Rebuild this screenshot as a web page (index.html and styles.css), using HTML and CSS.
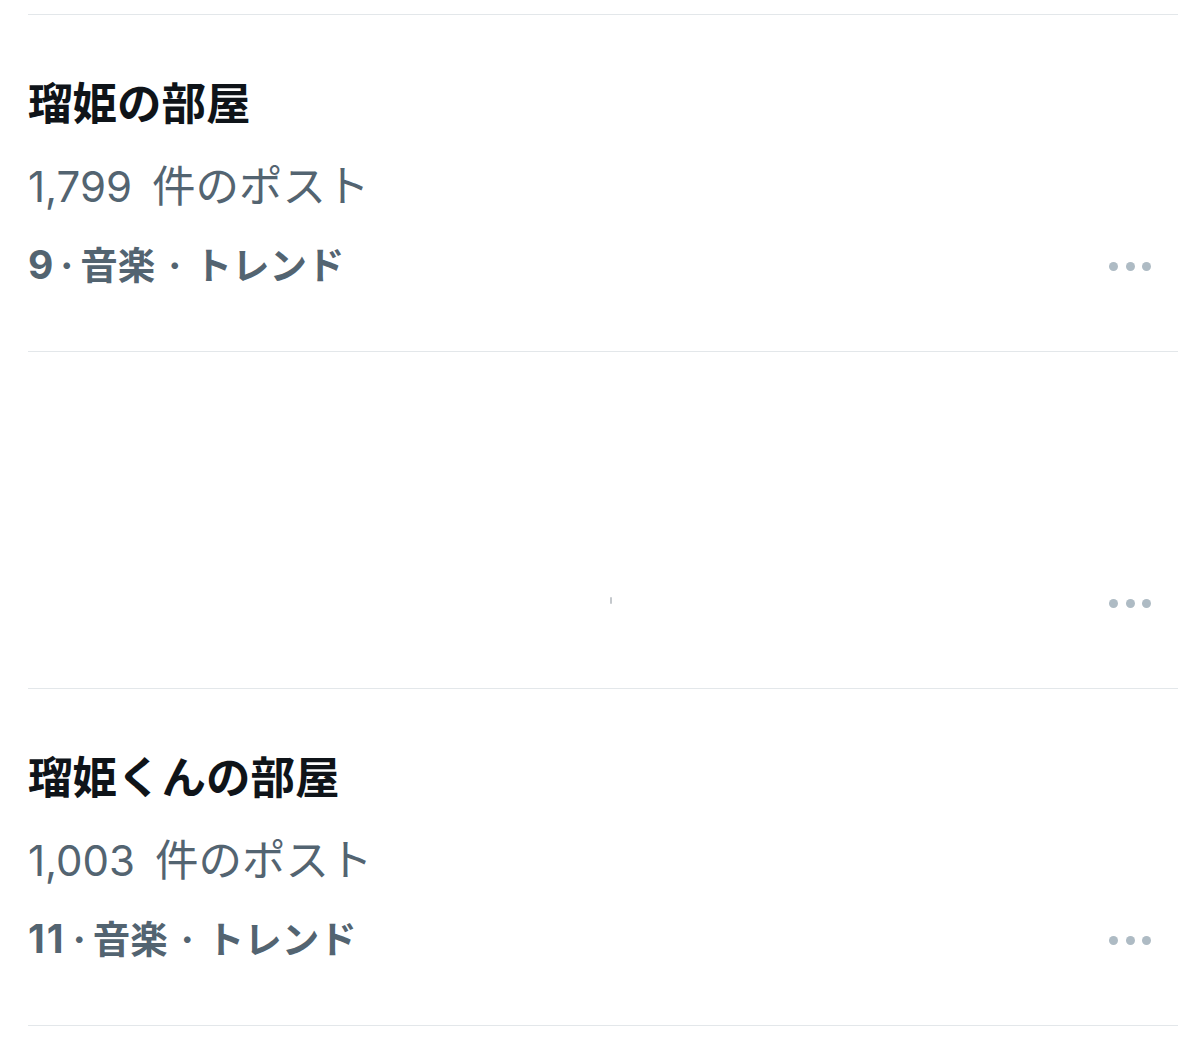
FILE: index.html
```html
<!DOCTYPE html>
<html lang="ja">
<head>
<meta charset="utf-8">
<title>トレンド</title>
<link rel="stylesheet" href="styles.css">
</head>
<body>
<div class="list">
  <div class="row">
    <div class="title">瑠姫の部屋</div>
    <div class="count"><span class="num">1,799</span><span class="unit">件のポスト</span></div>
    <div class="meta">
      <span class="meta-text"><span class="rank">9</span><span class="sep">·</span>音楽<span class="sep sep-wide">·</span>トレンド</span>
      <span class="more"><i></i><i></i><i></i></span>
    </div>
  </div>
  <div class="row">
    <div class="title"></div>
    <div class="count"></div>
    <div class="meta">
      <span class="meta-text"></span>
      <span class="more"><i></i><i></i><i></i></span>
    </div>
    <span class="speck"></span>
  </div>
  <div class="row">
    <div class="title">瑠姫くんの部屋</div>
    <div class="count"><span class="num">1,003</span><span class="unit">件のポスト</span></div>
    <div class="meta">
      <span class="meta-text"><span class="rank rank-wide">11</span><span class="sep">·</span>音楽<span class="sep sep-wide">·</span>トレンド</span>
      <span class="more"><i></i><i></i><i></i></span>
    </div>
  </div>
</div>
</body>
</html>
```
FILE: styles.css
```css
html, body {
  margin: 0;
  padding: 0;
  background: #ffffff;
}
body {
  font-family: Inter, "Noto Sans CJK JP", sans-serif;
  width: 1200px;
  height: 1048px;
  overflow: hidden;
}
.list {
  margin: 14px 22px 0 28px;
  border-top: 1px solid #e3e7ea;
}
.row {
  position: relative;
  height: 287px;
  border-bottom: 1px solid #e3e7ea;
  padding-top: 49px;
  display: flex;
  flex-direction: column;
}
.title {
  height: 80px;
  line-height: 80px;
  font-size: 44.5px;
  font-weight: 700;
  color: #0f1419;
  white-space: nowrap;
}
.count {
  height: 80px;
  line-height: 80px;
  color: #536471;
  white-space: nowrap;
  display: flex;
  align-items: baseline;
}
.num {
  font-size: 42px;
  font-weight: 400;
}
.unit {
  font-family: "Noto Sans CJK JP", sans-serif;
  font-size: 43.5px;
  font-weight: 400;
  margin-left: 20px;
}
.meta {
  height: 80px;
  margin-top: 2px;
  display: flex;
  align-items: center;
  justify-content: space-between;
  padding-right: 27px;
}
.meta-text {
  font-family: "Noto Sans CJK JP", sans-serif;
  font-size: 37.5px;
  font-weight: 600;
  color: #536471;
  line-height: 76px;
  padding-bottom: 4px;
  white-space: nowrap;
  display: flex;
  align-items: baseline;
}
.rank {
  font-family: Inter, sans-serif;
  font-size: 39px;
  font-weight: 700;
}
.rank-wide {
  letter-spacing: 2px;
}
.sep {
  font-family: Inter, sans-serif;
  font-size: 39px;
  font-weight: 700;
  margin: 0 7px 0 7px;
}
.sep-wide {
  margin: 0 13px 0 13px;
}
.more {
  display: flex;
  gap: 7.5px;
  align-items: center;
}
.more i {
  display: block;
  width: 9px;
  height: 9px;
  border-radius: 50%;
  background: #aebbc4;
}
.speck {
  position: absolute;
  left: 582px;
  top: 245px;
  width: 2px;
  height: 7px;
  border-radius: 1px;
  background: #c4c8cc;
}
```
